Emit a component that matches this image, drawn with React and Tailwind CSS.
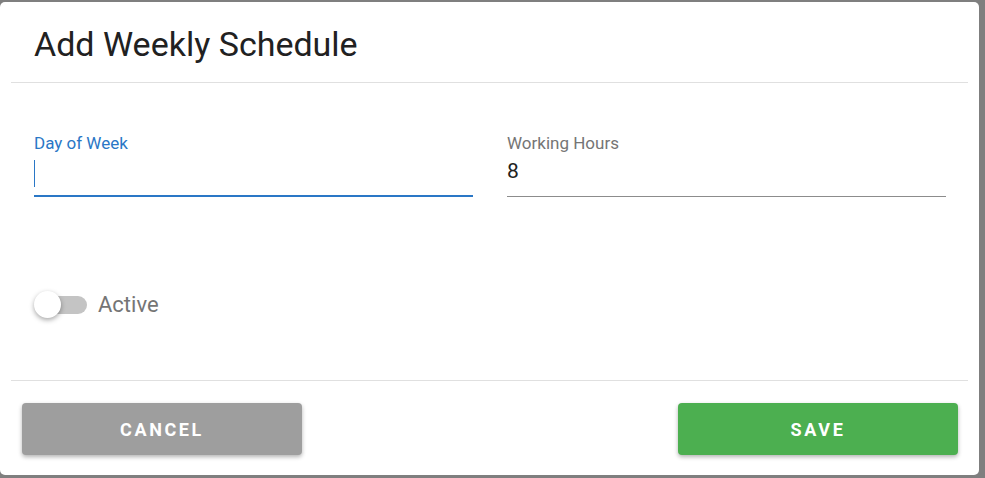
import React from 'react';

function Field({ label, value, focused }) {
    return (
        <div className="flex flex-col">
            <label className={`text-[17px] leading-[20px] ${focused ? 'text-[#2a77c6]' : 'text-[#757575]'}`}>
                {label}
            </label>
            <div
                className={`mt-[4px] h-[40px] ${focused ? 'border-b-2 border-[#2a77c6]' : 'border-b border-[#8c8c8c]'}`}
            >
                <div className="flex h-[28px] items-center text-[21px] leading-[28px] text-[#212121]">
                    {focused && <span className="mt-[4px] block h-[27px] w-px bg-[#2a77c6]" />}
                    {value}
                </div>
            </div>
        </div>
    );
}

export default function App() {
    return (
        <div
            className="h-[478px] w-[985px] overflow-hidden bg-[#7f7f7f] pt-[2px]"
            style={{ fontFamily: 'Roboto, "Noto Sans", sans-serif' }}
        >
            <div className="flex h-[473px] w-[979px] flex-col rounded-[5px] bg-white">
                <div className="h-[80px] pl-[34px] pt-[22px]">
                    <h1 className="text-[34px] font-normal leading-[40px] text-[#212121]">Add Weekly Schedule</h1>
                </div>
                <div className="mx-[11px] h-px bg-[#e0e0e0]" />

                <div className="grid grid-cols-2 gap-[34px] pl-[34px] pr-[33px] pt-[50px]">
                    <Field label="Day of Week" value="" focused />
                    <Field label="Working Hours" value="8" />
                </div>

                <div className="mt-[94px] flex items-center pl-[34px]">
                    <div className="relative flex h-[27px] w-[54px] items-center">
                        <div className="ml-[2px] h-[18px] w-[51px] rounded-full bg-[#c4c4c4]" />
                        <div className="absolute left-0 top-0 h-[27px] w-[27px] rounded-full bg-white shadow-[0_2px_5px_rgba(0,0,0,0.35)]" />
                    </div>
                    <span className="ml-[10px] text-[22px] leading-[26px] text-[#757575]">Active</span>
                </div>

                <div className="mx-[11px] mt-[62px] h-px bg-[#e0e0e0]" />

                <div className="flex justify-between pl-[22px] pr-[21px] pt-[22px]">
                    <button className="h-[52px] w-[280px] rounded-[4px] bg-[#9e9e9e] text-[18px] font-bold tracking-[2.6px] text-white shadow-[0_2px_4px_rgba(0,0,0,0.3)]">
                        CANCEL
                    </button>
                    <button className="h-[52px] w-[280px] rounded-[4px] bg-[#4caf50] text-[18px] font-bold tracking-[2.6px] text-white shadow-[0_2px_4px_rgba(0,0,0,0.3)]">
                        SAVE
                    </button>
                </div>
            </div>
        </div>
    );
}
